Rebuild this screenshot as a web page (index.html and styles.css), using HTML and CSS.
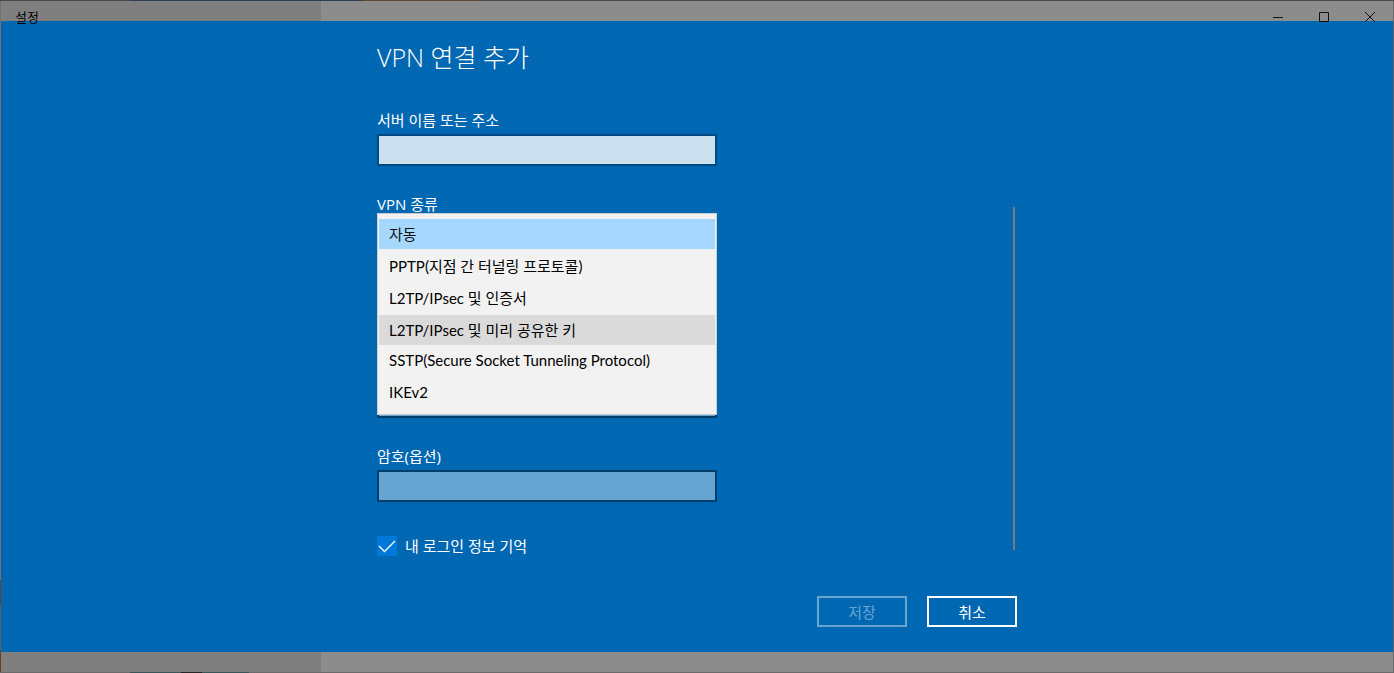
FILE: index.html
```html
<!DOCTYPE html>
<html lang="ko">
<head>
    <meta charset="UTF-8">
    <meta name="viewport" content="width=device-width, initial-scale=1.0">
    <title>설정</title>
    <link rel="stylesheet" href="styles.css">
</head>
<body>
    <div class="window">
        <header class="titlebar">
            <span class="titlebar-name">설정</span>
            <button class="caption-btn" type="button" aria-label="최소화">
                <svg width="10" height="10" viewBox="0 0 10 10"><path d="M0 5.5H10"/></svg>
            </button>
            <button class="caption-btn" type="button" aria-label="최대화">
                <svg width="10" height="10" viewBox="0 0 10 10"><path d="M.5 .5H9.5V9.5H.5Z"/></svg>
            </button>
            <button class="caption-btn" type="button" aria-label="닫기">
                <svg width="10" height="10" viewBox="0 0 10 10"><path d="M0 0L10 10M10 0L0 10"/></svg>
            </button>
        </header>
        <main class="dialog">
            <form class="dialog-content">
                <h1 class="dialog-title">VPN 연결 추가</h1>
                <div class="scroll-area">
                    <div class="fields">
                        <div class="form-group">
                            <label for="server">서버 이름 또는 주소</label>
                            <input class="text-box" type="text" id="server" name="server">
                        </div>
                        <div class="form-group">
                            <label for="vpnType">VPN 종류</label>
                            <select class="type-list" id="vpnType" name="vpnType" size="6">
                                <option selected>자동</option>
                                <option>PPTP(지점 간 터널링 프로토콜)</option>
                                <option>L2TP/IPsec 및 인증서</option>
                                <option class="hovered">L2TP/IPsec 및 미리 공유한 키</option>
                                <option>SSTP(Secure Socket Tunneling Protocol)</option>
                                <option>IKEv2</option>
                            </select>
                        </div>
                        <div class="form-group">
                            <select class="text-box" name="signIn" aria-label="로그인 정보 입력"></select>
                        </div>
                        <div class="form-group">
                            <input class="text-box optional" type="text" name="user" aria-label="사용자 이름(옵션)">
                        </div>
                        <div class="form-group">
                            <label for="password">암호(옵션)</label>
                            <input class="text-box optional" type="password" id="password" name="password">
                        </div>
                        <label class="remember">
                            <input type="checkbox" name="remember" checked>
                            <svg class="check" width="20" height="20" viewBox="0 0 20 20"><path d="M2 10L7.500 15.500L18 5"/></svg>
                            <span>내 로그인 정보 기억</span>
                        </label>
                    </div>
                    <div class="scroll-thumb"></div>
                </div>
                <div class="actions">
                    <button class="btn" type="submit" disabled>저장</button>
                    <button class="btn" type="button">취소</button>
                </div>
            </form>
        </main>
    </div>
</body>
</html>
```
FILE: styles.css
```css
* {
    box-sizing: border-box;
}
body {
    margin: 0;
    font-family: "Open Sans", "Noto Sans CJK KR", sans-serif;
    font-size: 15px;
    line-height: 20px;
    color: #fff;
}
button, input, select {
    font: inherit;
    color: inherit;
}
.window {
    display: flex;
    flex-direction: column;
    min-height: 100vh;
    padding: 1px;
    background:
        linear-gradient(90deg, #4a4a4c 130px, #2f3f50 130px 362px, #5c4a30 362px 480px, #4a4a4c 480px) top / 100% 1px no-repeat,
        linear-gradient(90deg, #6b6b6b 130px, #3c5558 130px 181px, #262626 181px 202px, #3c5558 202px 249px, #6b6b6b 249px) bottom / 100% 1px no-repeat,
        linear-gradient(#77706a 580px, #6e4022 580px 605px, #66605c 605px 650px, #6e4022 650px) left / 1px 100% no-repeat,
        linear-gradient(#666, #666) right / 1px 100% no-repeat,
        linear-gradient(90deg, #7f7f7f 321px, #8c8c8c 321px);
}

/* the dialog starts under the lower part of the title bar */
.titlebar {
    position: relative;
    z-index: 1;
    display: flex;
    align-items: center;
    height: 32px;
    margin-bottom: -12px;
    color: #000;
}
.titlebar-name {
    margin-right: auto;
    padding-left: 14px;
    font-size: 13px;
}
.caption-btn {
    display: flex;
    align-items: center;
    justify-content: center;
    width: 46px;
    height: 32px;
    padding: 0;
    border: none;
    background: none;
}
.caption-btn svg {
    fill: none;
    stroke: #111;
}

.dialog {
    flex: 1;
    margin-bottom: 20px;
    padding: 20px 0 25px;
    background: #0067b3;
}
.dialog-content {
    max-width: 640px;
    margin: 0 auto;
}
.dialog-title {
    margin: 0 0 37px;
    font-size: 25px;
    font-weight: 300;
    line-height: 32px;
}
.scroll-area {
    display: flex;
    justify-content: space-between;
    align-items: flex-end;
}
.fields {
    width: 340px;
}
.form-group {
    position: relative;
    display: flex;
    flex-direction: column;
    justify-content: flex-end;
    gap: 4px;
    height: 56px;
    margin-bottom: 28px;
}
.form-group:has(.type-list) {
    justify-content: flex-start;
}
.text-box {
    width: 100%;
    height: 32px;
    padding: 4px 10px;
    border: 2px solid #004a80;
    border-radius: 0;
    background: #cce1f0;
    color: #000;
    outline: none;
}
.text-box.optional {
    border-color: #003e6b;
    background: #66a4d1;
}

/* opened drop-down list */
.type-list {
    position: absolute;
    z-index: 2;
    top: 19px;
    left: 0;
    width: 100%;
    height: 202px;
    padding: 5px 1px;
    border: 1px solid #ccc;
    border-radius: 0;
    background: #f2f2f2;
    font-family: Lato, "Noto Sans CJK KR", sans-serif;
    color: #000;
    overflow: hidden;
    outline: none;
}
.type-list option {
    height: 30px;
    margin-bottom: 2px;
    padding: 4px 10px 6px;
    line-height: 20px;
}
.type-list option:checked {
    background: linear-gradient(#a6d8ff, #a6d8ff);
}
.type-list .hovered {
    background: #dadada;
}

.remember {
    position: relative;
    display: flex;
    align-items: center;
    gap: 8px;
    margin-top: 34px;
}
.remember input {
    appearance: none;
    width: 20px;
    height: 20px;
    margin: 0;
    background: #0078d9;
}
.check {
    position: absolute;
    left: 0;
    top: 0;
    fill: none;
    stroke: #fff;
    stroke-width: 1.4;
    pointer-events: none;
}
.scroll-thumb {
    width: 2px;
    height: 343px;
    margin: 0 2px 6px 0;
    background: #7a7a7a;
}
.actions {
    display: flex;
    justify-content: flex-end;
    gap: 20px;
    margin-top: 40px;
}
.btn {
    width: 90px;
    height: 31px;
    padding: 0;
    border: 2px solid #fff;
    background: none;
}
.btn:disabled {
    border-color: #66a4d1;
    color: #66a4d1;
}
```
